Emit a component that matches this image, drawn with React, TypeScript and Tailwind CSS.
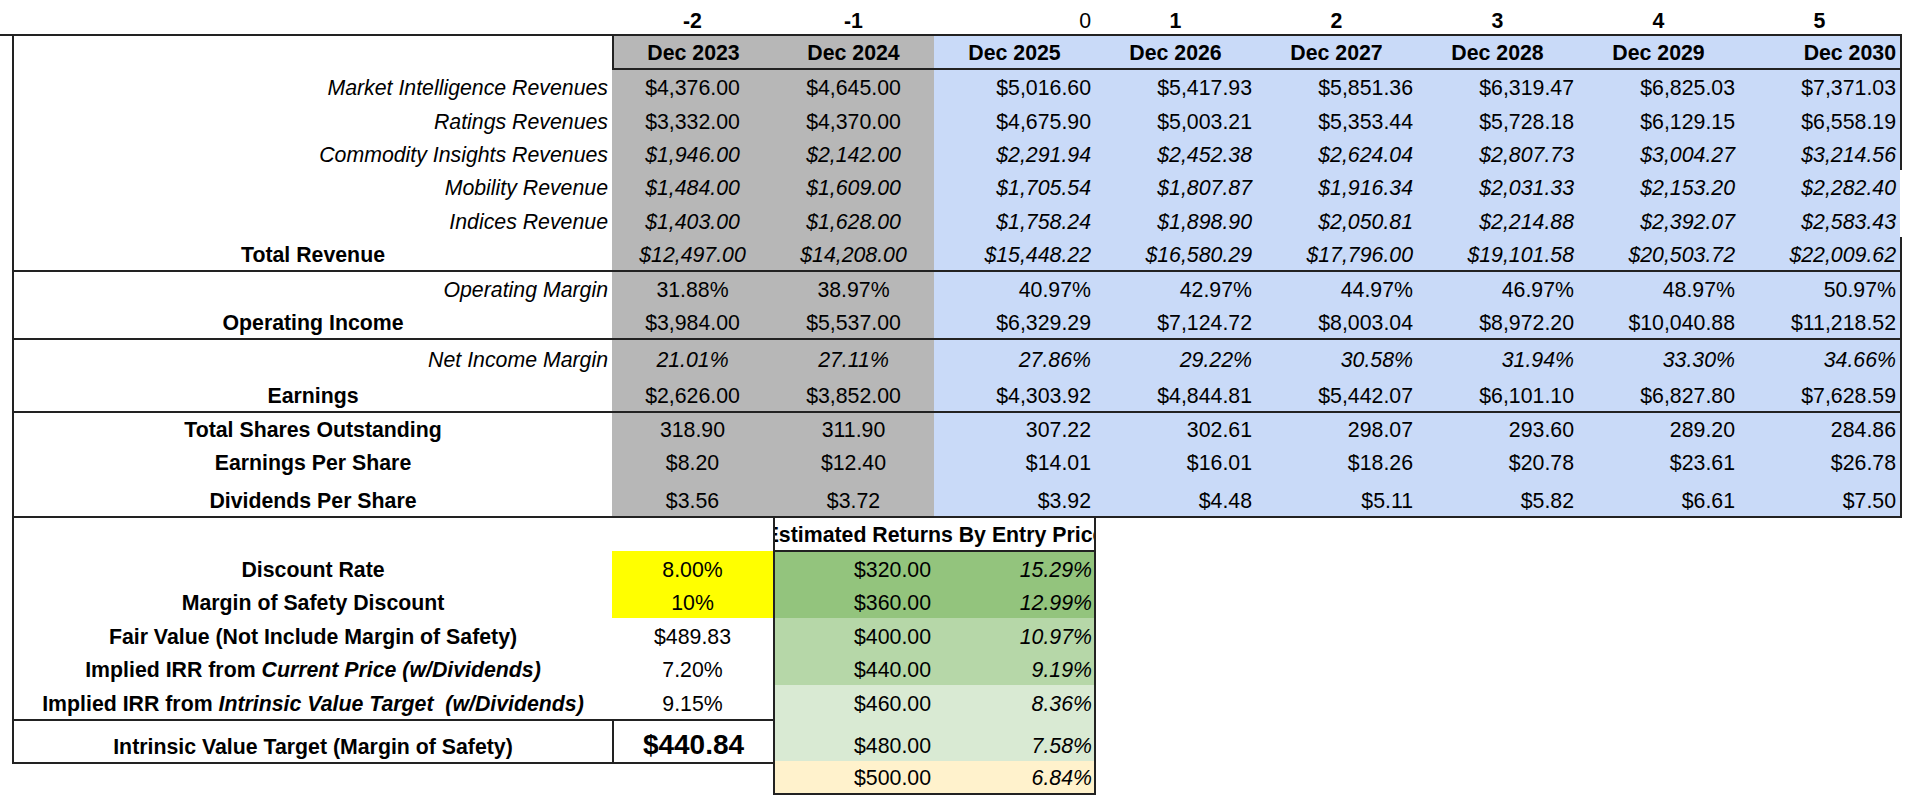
import React from "react"

type DataRow = {
  label: string
  bold?: boolean
  italic?: boolean
  values: string[]
  h: string
  noRight?: boolean
}

const line = "border-[#222]"

const groups: DataRow[][] = [
  [
    { label: "Market Intelligence Revenues", h: "h-[33.33px]", values: ["$4,376.00", "$4,645.00", "$5,016.60", "$5,417.93", "$5,851.36", "$6,319.47", "$6,825.03", "$7,371.03"] },
    { label: "Ratings Revenues", h: "h-[33.33px]", values: ["$3,332.00", "$4,370.00", "$4,675.90", "$5,003.21", "$5,353.44", "$5,728.18", "$6,129.15", "$6,558.19"] },
    { label: "Commodity Insights Revenues", italic: true, h: "h-[33.33px]", values: ["$1,946.00", "$2,142.00", "$2,291.94", "$2,452.38", "$2,624.04", "$2,807.73", "$3,004.27", "$3,214.56"] },
    { label: "Mobility Revenue", italic: true, noRight: true, h: "h-[33.33px]", values: ["$1,484.00", "$1,609.00", "$1,705.54", "$1,807.87", "$1,916.34", "$2,031.33", "$2,153.20", "$2,282.40"] },
    { label: "Indices Revenue", italic: true, noRight: true, h: "h-[33.33px]", values: ["$1,403.00", "$1,628.00", "$1,758.24", "$1,898.90", "$2,050.81", "$2,214.88", "$2,392.07", "$2,583.43"] },
    { label: "Total Revenue", bold: true, italic: true, h: "h-[33.33px]", values: ["$12,497.00", "$14,208.00", "$15,448.22", "$16,580.29", "$17,796.00", "$19,101.58", "$20,503.72", "$22,009.62"] },
  ],
  [
    { label: "Operating Margin", h: "h-[33px]", values: ["31.88%", "38.97%", "40.97%", "42.97%", "44.97%", "46.97%", "48.97%", "50.97%"] },
    { label: "Operating Income", bold: true, h: "h-[33px]", values: ["$3,984.00", "$5,537.00", "$6,329.29", "$7,124.72", "$8,003.04", "$8,972.20", "$10,040.88", "$11,218.52"] },
  ],
  [
    { label: "Net Income Margin", italic: true, h: "h-[35.5px]", values: ["21.01%", "27.11%", "27.86%", "29.22%", "30.58%", "31.94%", "33.30%", "34.66%"] },
    { label: "Earnings", bold: true, h: "h-[35.5px]", values: ["$2,626.00", "$3,852.00", "$4,303.92", "$4,844.81", "$5,442.07", "$6,101.10", "$6,827.80", "$7,628.59"] },
  ],
  [
    { label: "Total Shares Outstanding", bold: true, h: "h-[32.5px]", values: ["318.90", "311.90", "307.22", "302.61", "298.07", "293.60", "289.20", "284.86"] },
    { label: "Earnings Per Share", bold: true, h: "h-[33px]", values: ["$8.20", "$12.40", "$14.01", "$16.01", "$18.26", "$20.78", "$23.61", "$26.78"] },
    { label: "Dividends Per Share", bold: true, h: "h-[37.5px]", values: ["$3.56", "$3.72", "$3.92", "$4.48", "$5.11", "$5.82", "$6.61", "$7.50"] },
  ],
]

const dates = ["Dec 2023", "Dec 2024", "Dec 2025", "Dec 2026", "Dec 2027", "Dec 2028", "Dec 2029", "Dec 2030"]

const returns = [
  { price: "$320.00", pct: "15.29%", bg: "bg-[#93c47d]", h: "h-[33px]" },
  { price: "$360.00", pct: "12.99%", bg: "bg-[#93c47d]", h: "h-[33px]" },
  { price: "$400.00", pct: "10.97%", bg: "bg-[#b6d7a8]", h: "h-[34px]" },
  { price: "$440.00", pct: "9.19%", bg: "bg-[#b6d7a8]", h: "h-[33px]" },
  { price: "$460.00", pct: "8.36%", bg: "bg-[#d9ead3]", h: "h-[34px]" },
  { price: "$480.00", pct: "7.58%", bg: "bg-[#d9ead3]", h: "h-[42px]" },
  { price: "$500.00", pct: "6.84%", bg: "bg-[#fff2cc]", h: "h-[32px]" },
]

function Row({ row }: { row: DataRow }) {
  return (
    <div
      className={`grid grid-cols-[598px_repeat(8,161px)] border-r-2 ${row.noRight ? "border-r-transparent" : line} ${row.h}`}
    >
      <div
        className={`flex items-end pb-[3px] whitespace-nowrap ${
          row.bold ? "justify-center font-bold" : "justify-end pr-[4px] italic"
        }`}
      >
        {row.label}
      </div>
      {row.values.map((v, i) => (
        <div
          key={i}
          className={`flex items-end pb-[3px] ${
            i < 2 ? "bg-[#b7b7b7] justify-center" : "bg-[#c9daf8] justify-end pr-[4px]"
          } ${row.italic ? "italic" : ""}`}
        >
          {v}
        </div>
      ))}
    </div>
  )
}

export default function App() {
  return (
    <div className="w-[1920px] h-[805px] bg-white text-black font-['Liberation_Sans',Arial,sans-serif] text-[21.3px] leading-[24px] overflow-hidden">
      {/* period offsets */}
      <div className="grid grid-cols-[612px_repeat(8,161px)] h-[34px]">
        <div />
        <div className="flex items-end justify-center pb-[1px] font-bold">-2</div>
        <div className="flex items-end justify-center pb-[1px] font-bold">-1</div>
        <div className="flex items-end justify-end pr-[4px] pb-[1px]">0</div>
        {["1", "2", "3", "4", "5"].map((n) => (
          <div key={n} className="flex items-end justify-center pb-[1px] font-bold">
            {n}
          </div>
        ))}
      </div>
      <div className="h-[2px] w-[1902px] bg-[#222]" />

      <div className={`ml-[12px] w-[1890px] border-l-2 ${line}`}>
        {/* dates header */}
        <div className={`grid grid-cols-[598px_repeat(8,161px)] h-[34px] border-r-2 ${line}`}>
          <div />
          {dates.map((d, i) => (
            <div
              key={d}
              className={`flex items-end pb-[3px] font-bold border-b-2 ${line} ${
                i < 2 ? "bg-[#b7b7b7]" : "bg-[#c9daf8]"
              } ${i === 0 ? "border-l-2" : ""} ${i === 7 ? "justify-end pr-[4px]" : "justify-center"}`}
            >
              {d}
            </div>
          ))}
        </div>
        {groups.map((g, gi) => (
          <div key={gi} className={`border-b-2 ${line}`}>
            {g.map((r) => (
              <Row key={r.label} row={r} />
            ))}
          </div>
        ))}
      </div>

      {/* valuation block */}
      <div className="flex">
        <div className="w-[12px]" />
        <div className={`w-[761px] self-start border-l-2 border-b-2 ${line}`}>
          <div className="h-[33px]" />
          <div className="grid grid-cols-[598px_161px] h-[34px]">
            <div className="flex items-end justify-center pb-[3px] font-bold">Discount Rate</div>
            <div className="flex items-end justify-center pb-[3px] bg-[#ffff00]">8.00%</div>
          </div>
          <div className="grid grid-cols-[598px_161px] h-[33px]">
            <div className="flex items-end justify-center pb-[3px] font-bold">Margin of Safety Discount</div>
            <div className="flex items-end justify-center pb-[3px] bg-[#ffff00]">10%</div>
          </div>
          <div className="grid grid-cols-[598px_161px] h-[34px]">
            <div className="flex items-end justify-center pb-[3px] font-bold">Fair Value (Not Include Margin of Safety)</div>
            <div className="flex items-end justify-center pb-[3px]">$489.83</div>
          </div>
          <div className="grid grid-cols-[598px_161px] h-[33px]">
            <div className="flex items-end justify-center pb-[3px] font-bold whitespace-pre">
              Implied IRR from <i>Current Price (w/Dividends)</i>
            </div>
            <div className="flex items-end justify-center pb-[3px]">7.20%</div>
          </div>
          <div className="grid grid-cols-[598px_161px] h-[34px]">
            <div className="flex items-end justify-center pb-[3px] font-bold whitespace-pre">
              Implied IRR from <i>Intrinsic Value Target  (w/Dividends)</i>
            </div>
            <div className="flex items-end justify-center pb-[3px]">9.15%</div>
          </div>
          <div className={`grid grid-cols-[598px_161px] h-[43px] border-t-2 ${line}`}>
            <div className="flex items-end justify-center pb-[3px] font-bold">Intrinsic Value Target (Margin of Safety)</div>
            <div className={`flex items-end justify-center pb-[1px] border-l-2 ${line} font-bold text-[28px] leading-[32px]`}>
              $440.84
            </div>
          </div>
        </div>

        <div className={`w-[323px] border-2 border-t-0 ${line}`}>
          <div className={`h-[34px] border-b-2 ${line} flex items-end justify-center pb-[3px] overflow-hidden whitespace-nowrap font-bold`}>
            Estimated Returns By Entry Price
          </div>
          {returns.map((r) => (
            <div key={r.price} className={`grid grid-cols-[159px_160px] ${r.h} ${r.bg}`}>
              <div className="flex items-end justify-end pr-[3px] pb-[3px]">{r.price}</div>
              <div className="flex items-end justify-end pr-[2px] pb-[3px] italic">{r.pct}</div>
            </div>
          ))}
        </div>
      </div>
    </div>
  )
}
